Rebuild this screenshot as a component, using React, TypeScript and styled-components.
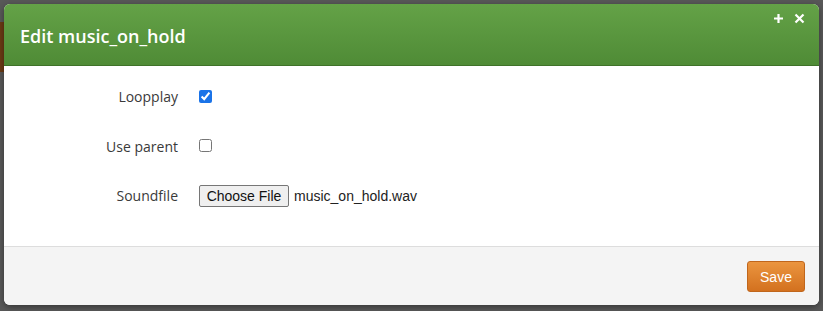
import styled, { createGlobalStyle } from "styled-components";

const GlobalStyle = createGlobalStyle`
  html, body {
    margin: 0;
    padding: 0;
    background: #585858;
  }
  body {
    font-family: "Open Sans", "Noto Sans", sans-serif;
  }
`;

const Backdrop = styled.div`
  width: 823px;
  height: 311px;
  padding: 4px;
  box-sizing: border-box;
  background: #585858;
  position: relative;
  overflow: hidden;
`;

// bit of the page peeking out behind the overlay on the left
const PageHint = styled.div`
  position: absolute;
  left: 0;
  top: 22px;
  width: 4px;
  height: 50px;
  background: #6b3b14;
`;

const Modal = styled.div`
  position: relative;
  width: 815px;
  height: 301px;
  border-radius: 6px;
  overflow: hidden;
  background: #fff;
  display: flex;
  flex-direction: column;
  box-shadow: 0 2px 6px rgba(0, 0, 0, 0.4);
`;

const Header = styled.div`
  height: 61px;
  flex: none;
  background: linear-gradient(to bottom, #64a247 0%, #4f8b36 100%);
  border-bottom: 1px solid #3f7229;
  display: flex;
  align-items: center;
  padding: 0 16px;
  position: relative;
`;

const Title = styled.h3`
  margin: 2px 0 0 0;
  color: #fff;
  font-size: 18px;
  font-weight: 600;
  font-family: "Open Sans", "Noto Sans", sans-serif;
`;

const HeaderTools = styled.div`
  position: absolute;
  right: 14px;
  top: 9px;
  display: flex;
  gap: 10px;
`;

const ToolButton = styled.button`
  background: none;
  border: none;
  padding: 0;
  color: #fff;
  display: flex;
  cursor: pointer;
`;

const Body = styled.div`
  flex: 1;
  padding: 6px 0 0 0;
  display: flex;
  flex-direction: column;
`;

const Row = styled.div`
  display: grid;
  grid-template-columns: 174px 1fr;
  column-gap: 21px;
  align-items: center;
  height: 49.5px;
`;

const Label = styled.label`
  text-align: right;
  font-size: 14px;
  color: #3a3a3a;
`;

const Check = styled.input`
  margin: 0;
  width: 13px;
  height: 13px;
  accent-color: #1a73e8;
`;

const FileField = styled.div`
  display: flex;
  align-items: center;
  gap: 5px;
  font-family: "Liberation Sans", Arial, sans-serif;
  font-size: 14px;
  color: #222;
`;

const FileButton = styled.button`
  font-family: "Liberation Sans", Arial, sans-serif;
  font-size: 14px;
  color: #111;
  background: #efefef;
  border: 1px solid #767676;
  border-radius: 2px;
  height: 22px;
  width: 90px;
  padding: 0;
  margin: 0;
`;

const Footer = styled.div`
  height: 58px;
  flex: none;
  background: #f4f4f4;
  border-top: 1px solid #ddd;
  display: flex;
  justify-content: flex-end;
  align-items: center;
  padding: 0 14px;
`;

const SaveButton = styled.button`
  font-family: "Liberation Sans", Arial, sans-serif;
  font-size: 14px;
  color: #fff;
  background: linear-gradient(to bottom, #eb953f 0%, #d3711f 100%);
  border: 1px solid #c0661c;
  border-radius: 3px;
  height: 31px;
  width: 58px;
  margin-top: 1px;
  cursor: pointer;
`;

export default function App() {
  return (
    <>
      <GlobalStyle />
      <Backdrop>
        <PageHint />
        <Modal>
          <Header>
            <Title>Edit music_on_hold</Title>
            <HeaderTools>
              <ToolButton aria-label="expand">
                <svg width="11" height="11" viewBox="0 0 11 11">
                  <path d="M5.5 1v9M1 5.5h9" stroke="#fff" strokeWidth="2.2" />
                </svg>
              </ToolButton>
              <ToolButton aria-label="close">
                <svg width="11" height="11" viewBox="0 0 11 11">
                  <path d="M1.5 1.5l8 8M9.5 1.5l-8 8" stroke="#fff" strokeWidth="2.2" />
                </svg>
              </ToolButton>
            </HeaderTools>
          </Header>
          <Body>
            <Row>
              <Label>Loopplay</Label>
              <div>
                <Check type="checkbox" defaultChecked />
              </div>
            </Row>
            <Row>
              <Label>Use parent</Label>
              <div>
                <Check type="checkbox" />
              </div>
            </Row>
            <Row>
              <Label>Soundfile</Label>
              <FileField>
                <FileButton>Choose File</FileButton>
                <span>music_on_hold.wav</span>
              </FileField>
            </Row>
          </Body>
          <Footer>
            <SaveButton>Save</SaveButton>
          </Footer>
        </Modal>
      </Backdrop>
    </>
  );
}
